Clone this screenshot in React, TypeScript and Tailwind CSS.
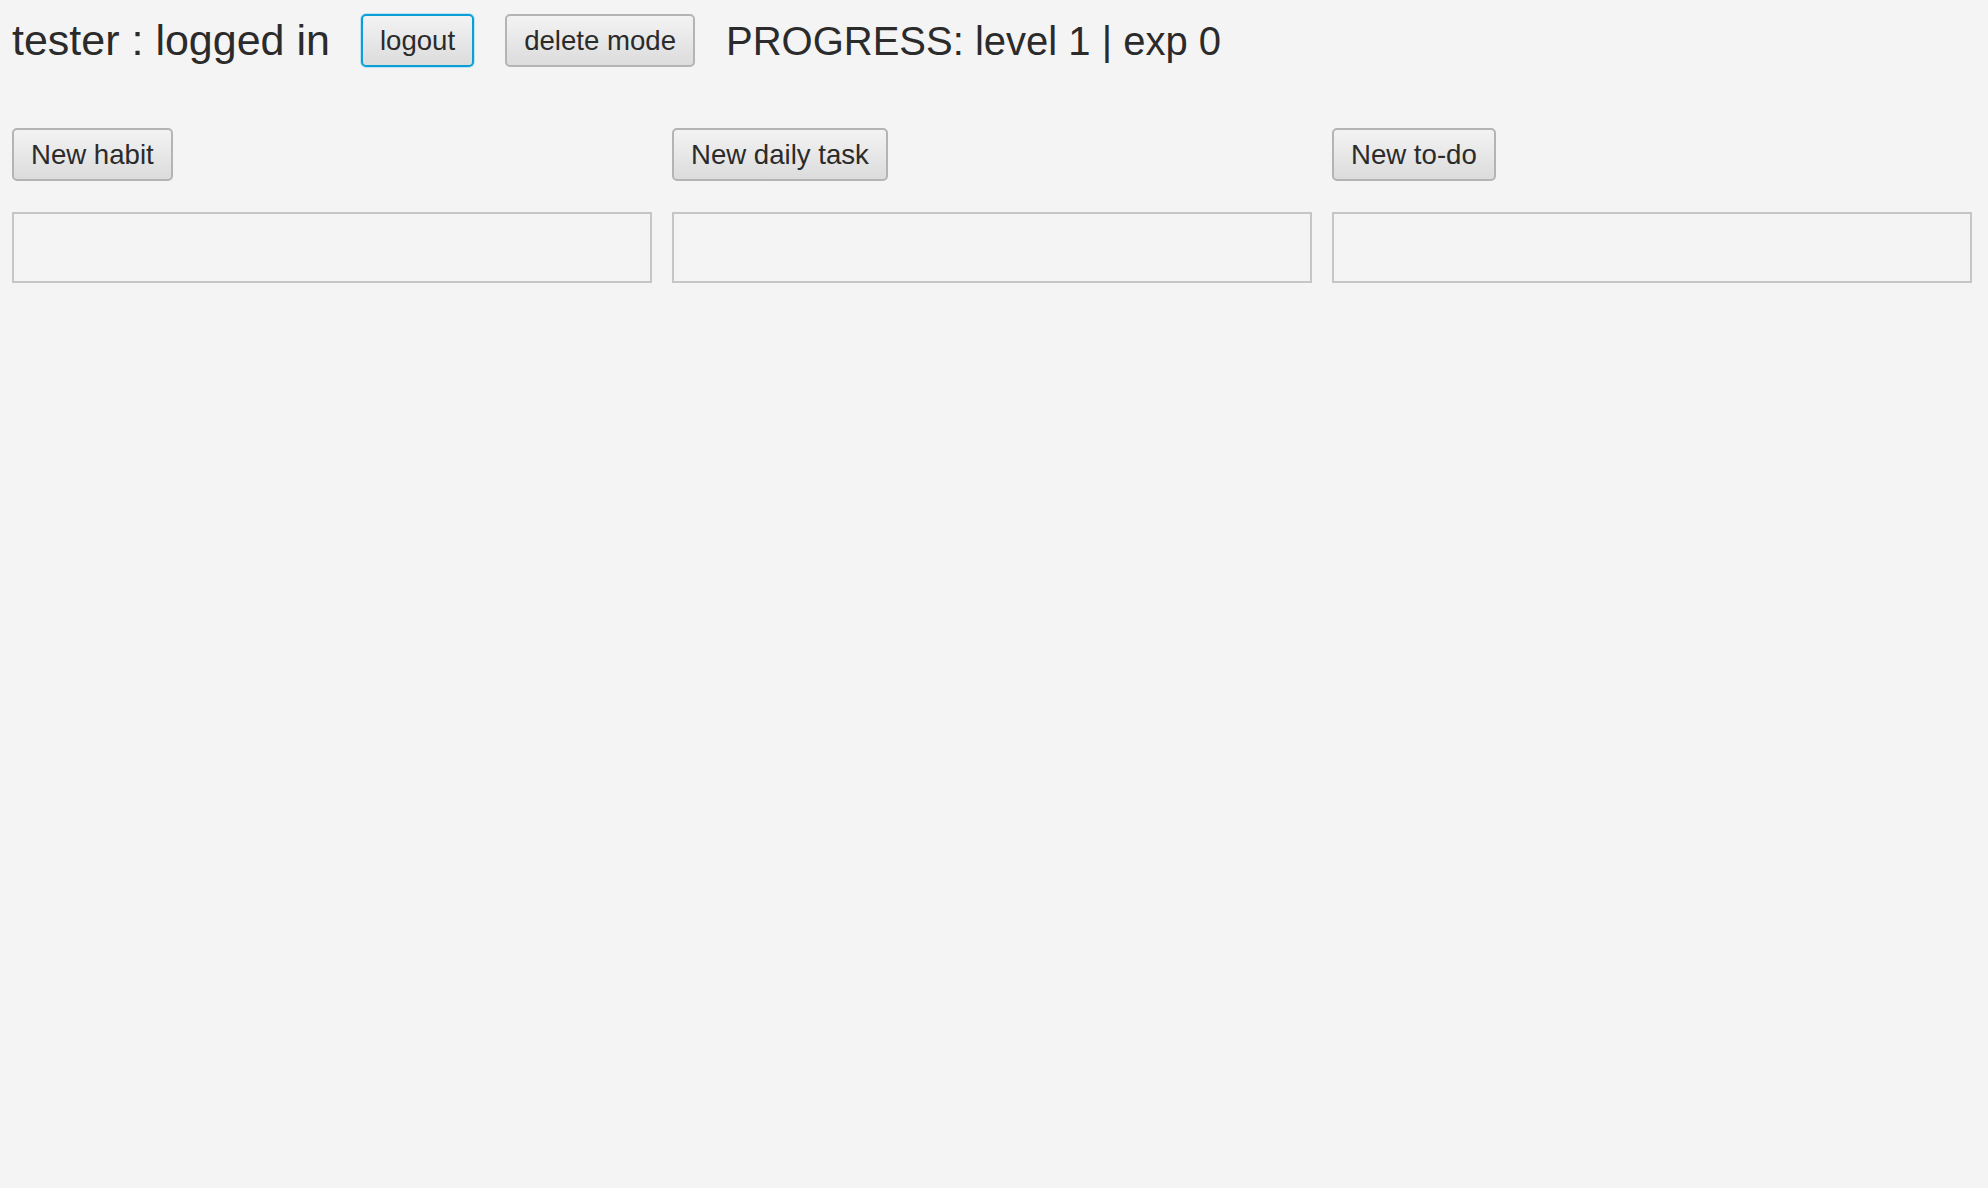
import React from "react";

function Btn({ label, focused }: { label: string; focused?: boolean }) {
  return (
    <button
      className={
        focused
          ? "h-[53px] px-[17px] rounded-[5px] border-2 border-[#0a9fd6] shadow-[0_0_0_1px_#bfe3f2] bg-linear-to-b from-[#f3f3f3] to-[#dcdcdc] text-[27.6px] leading-none text-[#2b2b2b] whitespace-nowrap"
          : "h-[53px] px-[17px] rounded-[5px] border-2 border-[#b4b4b4] bg-linear-to-b from-[#f3f3f3] to-[#dcdcdc] text-[27.6px] leading-none text-[#2b2b2b] whitespace-nowrap"
      }
    >
      {label}
    </button>
  );
}

function Column({ label }: { label: string }) {
  return (
    <div className="flex flex-col items-start gap-[31px]">
      <Btn label={label} />
      <div className="w-full h-[71px] border-2 border-[#c6c6c6]" />
    </div>
  );
}

export default function App() {
  return (
    <div
      className="min-h-screen bg-[#f4f4f4] text-[#2b2b2b] pt-[14px] pl-[12px] pr-[16px]"
      style={{ fontFamily: '"Liberation Sans", Arial, sans-serif' }}
    >
      {/* header */}
      <div className="flex items-center gap-[31px] h-[53px]">
        <span className="text-[43px] leading-none whitespace-nowrap">tester : logged in</span>
        <Btn label="logout" focused />
        <Btn label="delete mode" />
        <span className="text-[40px] leading-none whitespace-nowrap">PROGRESS: level 1 | exp 0</span>
      </div>

      {/* columns */}
      <div className="grid grid-cols-3 gap-[20px] mt-[61px]">
        <Column label="New habit" />
        <Column label="New daily task" />
        <Column label="New to-do" />
      </div>
    </div>
  );
}
